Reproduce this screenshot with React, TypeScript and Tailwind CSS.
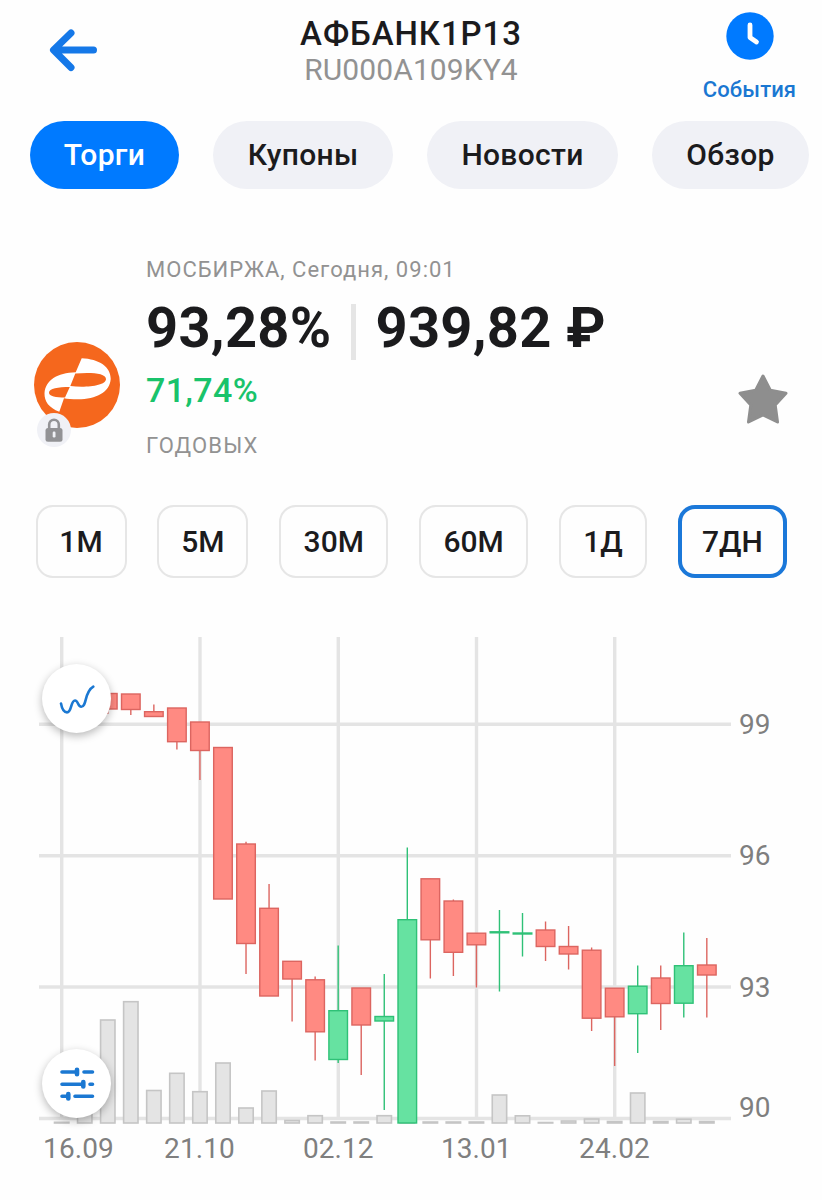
import { useState } from "react";

type Candle = {
  i: number;
  up?: boolean;
  top: number;
  bottom: number;
  high?: number;
  low?: number;
};

const TABS = [
  { label: "Торги", width: "w-[149px]" },
  { label: "Купоны", width: "w-[180px]" },
  { label: "Новости", width: "w-[191px]" },
  { label: "Обзор", width: "w-[157px]" },
];

const PERIODS = [
  { label: "1М", width: "w-[91px]" },
  { label: "5М", width: "w-[91px]" },
  { label: "30М", width: "w-[109px]" },
  { label: "60М", width: "w-[109px]" },
  { label: "1Д", width: "w-[88px]" },
  { label: "7ДН", width: "w-[109px]" },
];

const CANDLES: Candle[] = [
  { i: 2, top: 693.5, bottom: 709, low: 714 },
  { i: 3, top: 694, bottom: 709.5, low: 715 },
  { i: 4, top: 711.7, bottom: 716.5, high: 704.5 },
  { i: 5, top: 708, bottom: 741.7, low: 749.5 },
  { i: 6, top: 722, bottom: 750.5, low: 780 },
  { i: 7, top: 747.5, bottom: 899 },
  { i: 8, top: 844, bottom: 943.5, high: 841.7, low: 974 },
  { i: 9, top: 908.3, bottom: 996, high: 884 },
  { i: 10, top: 961.3, bottom: 979, low: 1021.5 },
  { i: 11, top: 979.8, bottom: 1031.8, high: 976.5, low: 1060.5 },
  { i: 12, up: true, top: 1010.7, bottom: 1059.5, high: 945.5, low: 1063 },
  { i: 13, top: 988, bottom: 1025, low: 1075 },
  { i: 14, up: true, top: 1016.5, bottom: 1021, high: 974, low: 1110 },
  { i: 15, up: true, top: 919.7, bottom: 1123, high: 847.5 },
  { i: 16, top: 878.8, bottom: 939.8, low: 978.5 },
  { i: 17, top: 901, bottom: 952.3, high: 899.5, low: 976 },
  { i: 18, top: 933.2, bottom: 944.8, low: 987.5 },
  { i: 19, up: true, top: 931.8, bottom: 932.8, high: 910, low: 991.5 },
  { i: 20, up: true, top: 933, bottom: 934, high: 913, low: 956.5 },
  { i: 21, top: 930, bottom: 946.5, high: 921.5, low: 961 },
  { i: 22, top: 946.5, bottom: 954, high: 926, low: 969.5 },
  { i: 23, top: 950.2, bottom: 1018.2, high: 947.5, low: 1031 },
  { i: 24, top: 988.2, bottom: 1016.8, low: 1066 },
  { i: 25, up: true, top: 986.2, bottom: 1013.7, high: 965.5, low: 1053 },
  { i: 26, top: 978, bottom: 1003.5, high: 965.5, low: 1030 },
  { i: 27, up: true, top: 965.7, bottom: 1003.2, high: 932.5, low: 1017.5 },
  { i: 28, top: 965, bottom: 975, high: 938, low: 1017.5 },
];

// top edge of every volume bar, one per week
const VOLUMES = [
  1122.3, 1112, 1020, 1001.7, 1090.5, 1073.3, 1091.7, 1063, 1108, 1091, 1120.5, 1115.7, 1122, 1122, 1115.7, 1122,
  1122, 1122, 1122, 1095, 1115.8, 1122.5, 1121, 1119, 1121.5, 1093, 1121.5, 1119.2, 1121.5,
];

const DATES = [
  { label: "16.09", line: 61.7, x: 78.5 },
  { label: "21.10", line: 200, x: 199.5 },
  { label: "02.12", line: 338.3, x: 338.3 },
  { label: "13.01", line: 476.5, x: 476.3 },
  { label: "24.02", line: 614.7, x: 614.5 },
];

const PRICES = [
  { label: "99", line: 724.2, y: 733.5 },
  { label: "96", line: 855.7, y: 865 },
  { label: "93", line: 987, y: 997 },
  { label: "90", line: 1118.5, y: 1117 },
];

const xOf = (i: number) => 61.7 + i * 23.04;

function Chart() {
  return (
    <svg width="822" height="580" viewBox="0 620 822 580" className="block">
      <g stroke="#e4e4e4" strokeWidth="3.4">
        {DATES.map((d) => <line key={d.label} x1={d.line} x2={d.line} y1="637" y2="1118" />)}
        {PRICES.map((p) => <line key={p.label} x1="39" x2="731" y1={p.line} y2={p.line} />)}
      </g>
      <g fill="#e4e4e4" stroke="#c5c5c5" strokeWidth="1.6">
        {VOLUMES.map((y, i) => <rect key={i} x={xOf(i) - 7.2} y={y} width="14.4" height={1123 - y} />)}
      </g>
      {CANDLES.map((c) => (
        <g key={c.i} fill={c.up ? "#66e2a1" : "#ff8a82"} stroke={c.up ? "#2fc177" : "#dc6560"} strokeWidth="1.4">
          <line x1={xOf(c.i)} x2={xOf(c.i)} y1={c.high ?? c.top} y2={c.low ?? c.bottom} />
          <rect x={xOf(c.i) - 9.3} y={c.top} width="18.6" height={c.bottom - c.top} />
        </g>
      ))}
      <g fill="#7f7f7f" fontSize="28" letterSpacing="0.1">
        {DATES.map((d) => <text key={d.label} x={d.x} y="1158" textAnchor="middle">{d.label}</text>)}
        {PRICES.map((p) => <text key={p.label} x="739" y={p.y} letterSpacing="0">{p.label}</text>)}
      </g>
    </svg>
  );
}

function BankLogo() {
  return (
    <svg width="86" height="86" viewBox="0 0 86 86" className="block">
      <circle cx="43" cy="43" r="43" fill="#f5671d" />
      <path
        fill="#fff"
        fillRule="evenodd"
        d="M47.700 16.300C65 17 77 25 76.700 37C76 50 62 57.300 44 57.300C38 57.300 33 57 30 56.300L25.300 69.700C15 66 10.300 59.500 10.500 51.300C11.500 38 23 31 41.700 30.300ZM41.300 31.500L36.300 44C51 46 72 44 72 37C72 31 57 30.300 41.300 31.500ZM35.800 45C24 45 15 46.500 15 50.700C15 54 22 55.500 31 55.500Z"
      />
    </svg>
  );
}

function LockIcon() {
  return (
    <svg width="18" height="24" viewBox="0 0 18 24">
      <path d="M4.200 11V6.500a4.800 4.800 0 0 1 9.600 0V11" fill="none" stroke="#929295" strokeWidth="2.600" />
      <rect x="0.500" y="10" width="17" height="13.700" rx="2.500" fill="#929295" />
      <rect x="7.700" y="13.500" width="2.800" height="6" rx="1.200" fill="#f0f1f6" />
    </svg>
  );
}

export default function App() {
  const [tab, setTab] = useState("Торги");
  const [period, setPeriod] = useState("7ДН");

  return (
    <div className="w-[822px] h-[1200px] overflow-hidden bg-[#fefefe] text-[#1b1b1d] font-[Roboto,sans-serif]">
      <header className="grid grid-cols-[1fr_auto_1fr] h-[121px]">
        <button className="justify-self-start ml-[48.500px] mt-[28px] h-[44px] cursor-pointer">
          <svg width="49" height="44" viewBox="0 0 49 44" fill="none" stroke="#1578e8" strokeWidth="7" strokeLinecap="round" strokeLinejoin="round">
            <path d="M22 5 4.500 22 22 39.500M5 22H44.500" />
          </svg>
        </button>
        <div className="pt-[15px] text-center">
          <h1 className="text-[33px] leading-[38px] font-medium tracking-[0.9px]">АФБАНК1Р13</h1>
          <p className="text-[30px] leading-[34px] tracking-[0.1px] text-[#929292]">RU000A109KY4</p>
        </div>
        <button className="justify-self-end w-[110px] mr-[17.500px] pt-[12px] flex flex-col items-center cursor-pointer">
          <svg width="48" height="48" viewBox="0 0 48 48">
            <circle cx="24" cy="24" r="23.700" fill="#007aff" />
            <path d="M24 13V25.500L30.500 30" fill="none" stroke="#fff" strokeWidth="4.800" strokeLinecap="round" strokeLinejoin="round" />
          </svg>
          <span className="mt-[17px] text-[22px] leading-[26px] font-medium tracking-[0.1px] text-[#1a77d2]">События</span>
        </button>
      </header>

      <nav className="flex gap-[34px] pl-[30px]">
        {TABS.map((t) => (
          <button key={t.label} onClick={() => setTab(t.label)}
            className={`h-[68px] pb-[2px] shrink-0 rounded-full text-[30px] font-medium tracking-[0.3px] cursor-pointer ${t.width} ${tab === t.label ? "bg-[#007aff] text-white" : "bg-[#f0f1f6]"}`}>
            {t.label}
          </button>
        ))}
      </nav>

      <section className="flex h-[316px] pl-[34px] pr-[33px]">
        <div className="relative mt-[153px] size-[86px]">
          <BankLogo />
          <span className="absolute left-[2.500px] top-[71px] size-[34px] rounded-full bg-[#f0f1f6] flex items-center justify-center">
            <LockIcon />
          </span>
        </div>
        <div className="ml-[26px] pt-[67px] grow">
          <p className="text-[22px] leading-[28px] tracking-[1.020px] text-[#929292]">МОСБИРЖА, Сегодня, 09:01</p>
          <div className="mt-[12px] flex h-[64px] text-[56px] leading-[64px] font-bold tracking-[0.300px]">
            <span>93,28%</span>
            <span className="ml-[19.500px] mr-[19.500px] mt-[8px] h-[56px] w-[5px] bg-[#e5e5e5]" />
            <span>939,82 ₽</span>
          </div>
          <p className="mt-[10px] text-[34px] leading-[40px] font-medium tracking-[0.350px] text-[#19c36b]">71,74%</p>
          <p className="mt-[22px] text-[22px] leading-[28px] tracking-[1.150px] text-[#929292]">ГОДОВЫХ</p>
        </div>
        <button className="self-start mt-[184px] cursor-pointer">
          <svg width="52" height="52" viewBox="0 0 52 52" fill="#8e8e8e" stroke="#8e8e8e" strokeWidth="3" strokeLinejoin="round">
            <path d="M26 3 33.300 17.300 49 20.300 38.200 32 40.500 49 26 42 11.500 49 13.800 32 3 20.300 18.700 17.300Z" />
          </svg>
        </button>
      </section>

      <div className="flex justify-between ml-[35.500px] w-[751.500px]">
        {PERIODS.map((p) => (
          <button key={p.label} onClick={() => setPeriod(p.label)}
            className={`h-[72.500px] rounded-[17px] text-[30px] font-medium cursor-pointer ${p.width} ${period === p.label ? "border-4 border-[#1b78d9]" : "border-2 border-[#e6e6e6]"}`}>
            {p.label}
          </button>
        ))}
      </div>

      <div className="relative mt-[42.500px]">
        <Chart />
        <button className="absolute left-[42px] top-[44px] size-[69px] rounded-full bg-white shadow-[0_3px_9px_rgba(0,0,0,0.28)] flex items-center justify-center cursor-pointer">
          <svg width="36" height="30" viewBox="59 684 36 30" fill="none" stroke="#1b78d2" strokeWidth="2.600" strokeLinecap="round">
            <path d="M61 703.500C62 709 64 712.400 67 712.400C72 712.400 70.500 700.500 75 700.500C78.500 700.500 77.500 706.800 81.300 706.800C87 706.800 84 692 93.300 686.700" />
          </svg>
        </button>
        <button className="absolute left-[42px] top-[429px] size-[69px] rounded-full bg-white shadow-[0_3px_9px_rgba(0,0,0,0.28)] flex items-center justify-center cursor-pointer">
          <svg width="36" height="36" viewBox="59 1066 36 36" fill="none" stroke="#1b78d2" strokeWidth="3.600" strokeLinecap="round">
            <path d="M62 1072H77M84 1072H92.500M62 1084.200H83M90 1084.200H92.500M62 1096.300H68M75 1096.300H92.500" />
            <path strokeWidth="4.600" d="M77 1069.800V1074.200M83.300 1082V1086.400M68.300 1094.100V1098.500" />
          </svg>
        </button>
      </div>
    </div>
  );
}
